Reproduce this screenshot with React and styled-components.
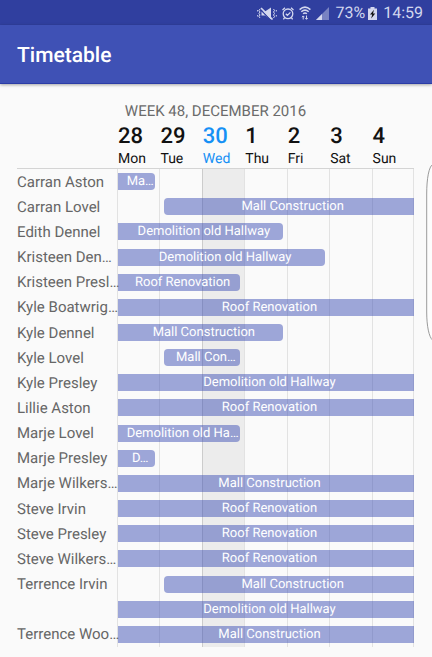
import React from "react";
import styled, { createGlobalStyle, css } from "styled-components";

const Global = createGlobalStyle`
  *, *::before, *::after { box-sizing: border-box; }
  body {
    margin: 0;
    background: #fafafa;
    font-family: Roboto, "Noto Sans", sans-serif;
    text-rendering: geometricPrecision;
  }
`;

const Page = styled.div`
  position: relative;
  display: flex;
  flex-direction: column;
  min-height: 100vh;
  overflow: hidden;
`;

const StatusBar = styled.div`
  display: flex;
  align-items: center;
  justify-content: flex-end;
  height: 25px;
  padding: 1px 9px 0 0;
  background: #303f9f;
  color: #d3d7ee;
  font-size: 16px;
  line-height: 24px;

  svg { display: block; flex: none; }
`;

const StatusIcons = styled.div`
  display: flex;
  align-items: center;
  gap: 5px;
  margin-right: 6px;
`;

const Battery = styled.div`
  margin: 0 6px 0 3px;
`;

const AppBar = styled.header`
  display: flex;
  align-items: center;
  height: 59px;
  padding: 4px 17px 0;
  background: #3f51b5;
  border-bottom: 1px solid #2b3ca6;
  box-shadow: 0 1px 3px rgba(0, 0, 0, 0.35);
`;

const Title = styled.h1`
  margin: 0;
  color: #fff;
  font-size: 21px;
  font-weight: 500;
  line-height: 28px;
`;

const Main = styled.main`
  display: flex;
  flex: 1;
  flex-direction: column;
  padding: 17px 18px 10px 17px;
`;

const Week = styled.h2`
  margin: 0;
  color: #6b6b6b;
  font-size: 15px;
  font-weight: 400;
  line-height: 20px;
  text-align: center;
`;

const columns = css`
  display: grid;
  grid-template-columns: 100px repeat(7, minmax(0, 1fr));
`;

const Days = styled.div`
  ${columns}
  padding-top: 3px;
  border-bottom: 1px solid #d4d4d4;
`;

const Day = styled.div`
  grid-column: ${(p) => p.$index + 2};
  padding-left: 1px;
  color: ${(p) => (p.$today ? "#1590f5" : "#111")};
  font-size: 14px;
  line-height: 18px;
`;

const DayNumber = styled.div`
  font-size: 22px;
  font-weight: 500;
  line-height: 26px;
`;

const Chart = styled.div`
  ${columns}
  flex: 1;
  grid-template-rows: repeat(${(p) => p.$rows}, minmax(25px, 1fr));
`;

const DayColumn = styled.span`
  grid-column: ${(p) => p.$index + 2};
  grid-row: 1 / -1;
  border-left: 1px solid ${(p) => (p.$today ? "#cccccc" : "#e2e2e2")};
  background: ${(p) => (p.$today ? "#ececec" : "transparent")};

  &:last-of-type { border-right: 1px solid #e2e2e2; }
`;

const Name = styled.div`
  grid-column: 1;
  grid-row: ${(p) => p.$row};
  align-self: center;
  color: #666;
  font-size: 15px;
  line-height: 20px;
  white-space: nowrap;
`;

const Bar = styled.div`
  grid-column: ${(p) => p.$from + 2} / ${(p) => p.$to + 3};
  grid-row: ${(p) => p.$row};
  align-self: center;
  height: 17px;
  margin-left: ${(p) => (p.$from > 0 ? 5 : 1)}px;
  margin-right: ${(p) => (p.$to < 6 ? 4 : 0)}px;
  padding: 0 1px 0 8px;
  border-radius: ${(p) => {
    const l = p.$from > 0 ? "4px" : "0";
    const r = p.$to < 6 ? "4px" : "0";
    return `${l} ${r} ${r} ${l}`;
  }};
  overflow: hidden;
  background: rgba(63, 81, 181, 0.5);
  color: #fff;
  font-size: 13px;
  line-height: 17px;
  text-align: center;
  white-space: nowrap;
`;

const EdgeHandle = styled.svg`
  position: absolute;
  top: 164px;
  right: 0;
`;

const days = [
  ["28", "Mon"], ["29", "Tue"], ["30", "Wed"], ["1", "Thu"],
  ["2", "Fri"], ["3", "Sat"], ["4", "Sun"],
];
const TODAY = 2;

const rows = [
  ["Carran Aston", 0, 0, "Ma…"],
  ["Carran Lovel", 1, 6, "Mall Construction"],
  ["Edith Dennel", 0, 3, "Demolition old Hallway"],
  ["Kristeen Den…", 0, 4, "Demolition old Hallway"],
  ["Kristeen Presl…", 0, 2, "Roof Renovation"],
  ["Kyle Boatwrig…", 0, 6, "Roof Renovation"],
  ["Kyle Dennel", 0, 3, "Mall Construction"],
  ["Kyle Lovel", 1, 2, "Mall Con…"],
  ["Kyle Presley", 0, 6, "Demolition old Hallway"],
  ["Lillie Aston", 0, 6, "Roof Renovation"],
  ["Marje Lovel", 0, 2, "Demolition old Ha…"],
  ["Marje Presley", 0, 0, "D…"],
  ["Marje Wilkers…", 0, 6, "Mall Construction"],
  ["Steve Irvin", 0, 6, "Roof Renovation"],
  ["Steve Presley", 0, 6, "Roof Renovation"],
  ["Steve Wilkers…", 0, 6, "Roof Renovation"],
  ["Terrence Irvin", 1, 6, "Mall Construction"],
  ["", 0, 6, "Demolition old Hallway"],
  ["Terrence Woo…", 0, 6, "Mall Construction"],
];

const MutedIcon = () => (
  <svg width="20" height="13" viewBox="0 0 20 13" fill="none" stroke="currentColor">
    <path d="M4.500 4.500h3.500l6-4v12l-6-4H4.500z" fill="currentColor" stroke="none" />
    <path d="M3.500 2.500 14 13.500" stroke="#303f9f" strokeWidth="1.200" />
    <path d="M4 1 15.500 12.500" strokeWidth="1.700" />
    <path d="M3 2 2 3.500 3 5 2 6.500 3 8 2 9.500 3 11M0.700 3v1.500M0.700 8v1.500M16.500 2l1 1.500-1 1.500 1 1.500-1 1.500 1 1.500-1 1.500M19.300 3v1.500M19.300 8v1.500" />
  </svg>
);

const AlarmIcon = () => (
  <svg width="12" height="13" viewBox="0 0 12 13" fill="none" stroke="currentColor" strokeWidth="1.300">
    <circle cx="6" cy="6.800" r="4.800" />
    <path d="M0.500 3 3 0.800M11.500 3 9 0.800M3.800 6.800l1.600 1.600L8.400 5.400M2.600 10.600 1.400 12.400M9.400 10.600l1.200 1.800" />
  </svg>
);

const WifiIcon = () => (
  <svg width="12" height="14" viewBox="0 0 12 14" fill="none" stroke="currentColor" strokeWidth="1.500">
    <path d="M0.600 3.600Q6-1.400 11.400 3.600M2.300 5.800q3.700-3.400 7.400 0M4.100 7.800q1.900-1.600 3.800 0" />
    <path d="M4.200 13.500V10M3 11.200l1.200-1.300 1.200 1.300M7.500 9.500v3.700M6.300 12l1.200 1.300L8.700 12" strokeWidth="1" />
  </svg>
);

const SignalIcon = () => (
  <svg width="13" height="13" viewBox="0 0 13 13" fill="currentColor">
    <path d="M0 13 13 0v13z" opacity="0.450" />
    <path d="M0 13 6 7v6z" />
  </svg>
);

const BatteryIcon = () => (
  <svg width="9" height="13" viewBox="0 0 9 13">
    <path d="M0 1.500h2.500V0h4v1.500H9V13H0z" fill="currentColor" />
    <path d="M6 2.800 2 7.500h2.200L3.200 11.400 7.200 6.500H5z" fill="#111" />
  </svg>
);

export default function App() {
  return (
    <>
      <Global />
      <Page>
        <StatusBar>
          <StatusIcons>
            <MutedIcon />
            <AlarmIcon />
            <WifiIcon />
            <SignalIcon />
          </StatusIcons>
          <span>73%</span>
          <Battery><BatteryIcon /></Battery>
          <time>14:59</time>
        </StatusBar>
        <AppBar>
          <Title>Timetable</Title>
        </AppBar>
        <Main>
          <Week>WEEK 48, DECEMBER 2016</Week>
          <Days>
            {days.map(([number, name], i) => (
              <Day key={name} $index={i} $today={i === TODAY}>
                <DayNumber>{number}</DayNumber>
                {name}
              </Day>
            ))}
          </Days>
          <Chart $rows={rows.length}>
            {days.map(([, name], i) => (
              <DayColumn key={name} $index={i} $today={i === TODAY} />
            ))}
            {rows.map(([, from, to, label], i) => (
              <Bar key={i} $row={i + 1} $from={from} $to={to}>{label}</Bar>
            ))}
            {rows.map(([name], i) => name && <Name key={name} $row={i + 1}>{name}</Name>)}
          </Chart>
        </Main>
        <EdgeHandle width="6" height="178" viewBox="0 0 6 178" fill="#fdfdfd" stroke="#9a9a9a" aria-hidden="true">
          <path d="M6.500 0.500C3 3 0.700 14 0.700 30v118c0 14 2.300 25 5.800 28" />
        </EdgeHandle>
      </Page>
    </>
  );
}
